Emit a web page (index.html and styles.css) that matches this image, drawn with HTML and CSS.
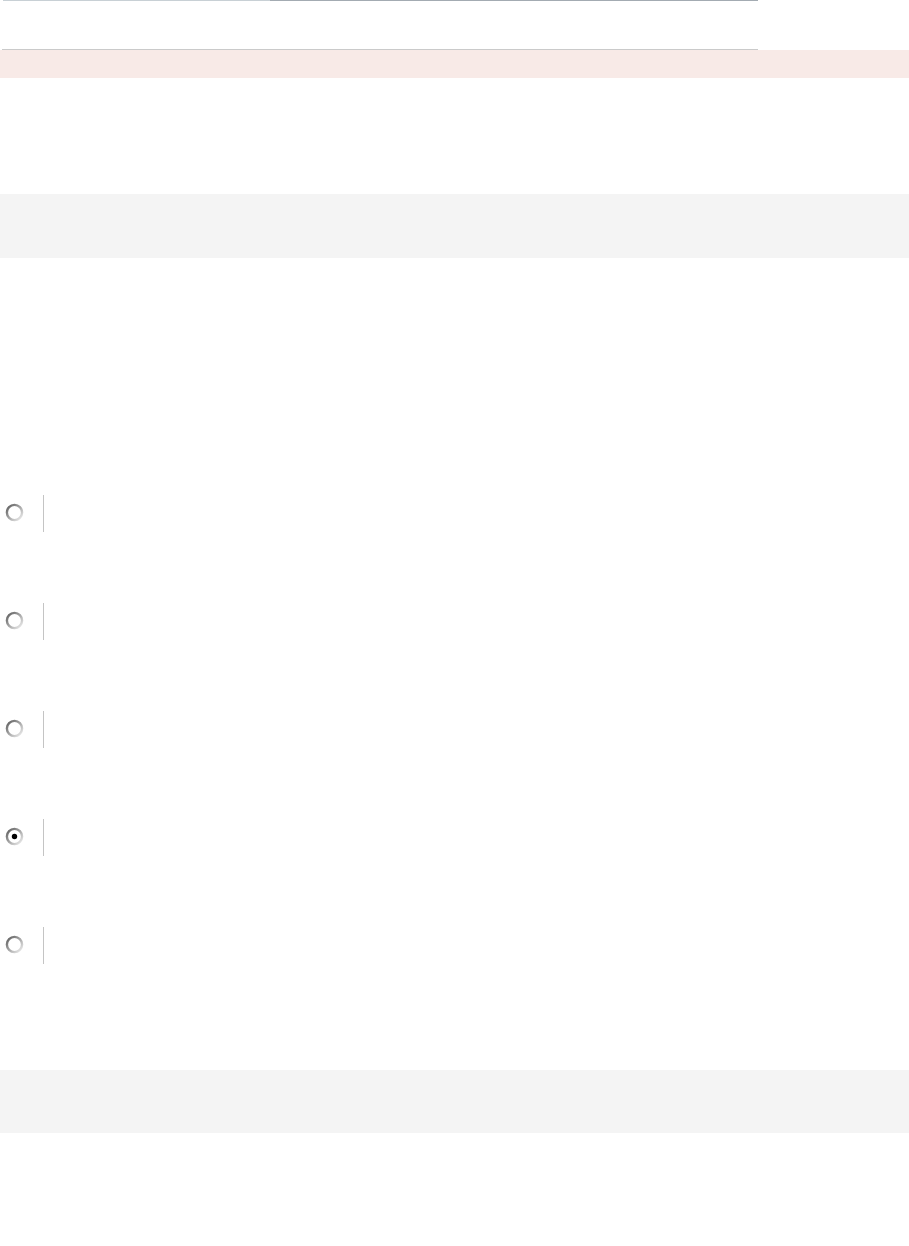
FILE: index.html
```html
<!DOCTYPE html>
<html lang="en">
<head>
<meta charset="utf-8">
<title>Question</title>
<link rel="stylesheet" href="styles.css">
</head>
<body>
<div class="page">
  <div class="progress"><span class="progress-done"></span><span class="progress-rest"></span></div>
  <div class="header-space"></div>
  <div class="rule"></div>
  <div class="notice"></div>
  <div class="question-bar"></div>
  <div class="options">
    <div class="option">
      <svg class="radio" width="19" height="19" viewBox="0 0 19 19"><defs><linearGradient id="rg" x1="0" y1="0" x2="1" y2="1"><stop offset="0" stop-color="#5a5a5a"/><stop offset="0.5" stop-color="#a6a6a6"/><stop offset="1" stop-color="#f2f2f2"/></linearGradient></defs><circle cx="9.5" cy="9.5" r="7.6" fill="#fff" stroke="url(#rg)" stroke-width="2.4"/></svg>
      <span class="divider"></span>
    </div>
    <div class="option">
      <svg class="radio" width="19" height="19" viewBox="0 0 19 19"><circle cx="9.5" cy="9.5" r="7.6" fill="#fff" stroke="url(#rg)" stroke-width="2.4"/></svg>
      <span class="divider"></span>
    </div>
    <div class="option">
      <svg class="radio" width="19" height="19" viewBox="0 0 19 19"><circle cx="9.5" cy="9.5" r="7.6" fill="#fff" stroke="url(#rg)" stroke-width="2.4"/></svg>
      <span class="divider"></span>
    </div>
    <div class="option">
      <svg class="radio" width="19" height="19" viewBox="0 0 19 19"><circle cx="9.5" cy="9.5" r="7.6" fill="#fff" stroke="url(#rg)" stroke-width="2.4"/><circle cx="9.5" cy="9.5" r="2.7" fill="#000"/></svg>
      <span class="divider"></span>
    </div>
    <div class="option">
      <svg class="radio" width="19" height="19" viewBox="0 0 19 19"><circle cx="9.5" cy="9.5" r="7.6" fill="#fff" stroke="url(#rg)" stroke-width="2.4"/></svg>
      <span class="divider"></span>
    </div>
  </div>
  <div class="footer-bar"></div>
</div>
</body>
</html>
```
FILE: styles.css
```css
html, body {
  margin: 0;
  padding: 0;
  background: #ffffff;
  font-family: "Liberation Sans", Arial, sans-serif;
}

.page {
  width: 909px;
  display: flex;
  flex-direction: column;
}

.progress {
  display: flex;
  margin-left: 3px;
  width: 755px;
  height: 1px;
}

.progress-done {
  width: 267px;
  background: #c8d0d5;
}

.progress-rest {
  flex: 1;
  background: #a3abb2;
}

.header-space {
  height: 48px;
}

.rule {
  margin-left: 2px;
  width: 756px;
  height: 1px;
  background: #cacaca;
}

.notice {
  height: 28px;
  background: #f8eae7;
}

.question-bar {
  margin-top: 116px;
  height: 64px;
  background: #f4f4f4;
}

.options {
  margin-top: 237px;
  display: flex;
  flex-direction: column;
  gap: 71px;
}

.option {
  display: flex;
  align-items: center;
  height: 37px;
}

.radio {
  margin-left: 5px;
  margin-top: -2px;
  display: block;
}

.divider {
  margin-left: 19px;
  width: 1px;
  height: 37px;
  background: #c4c4c4;
}

.footer-bar {
  margin-top: 106px;
  height: 63px;
  background: #f4f4f4;
}
```
